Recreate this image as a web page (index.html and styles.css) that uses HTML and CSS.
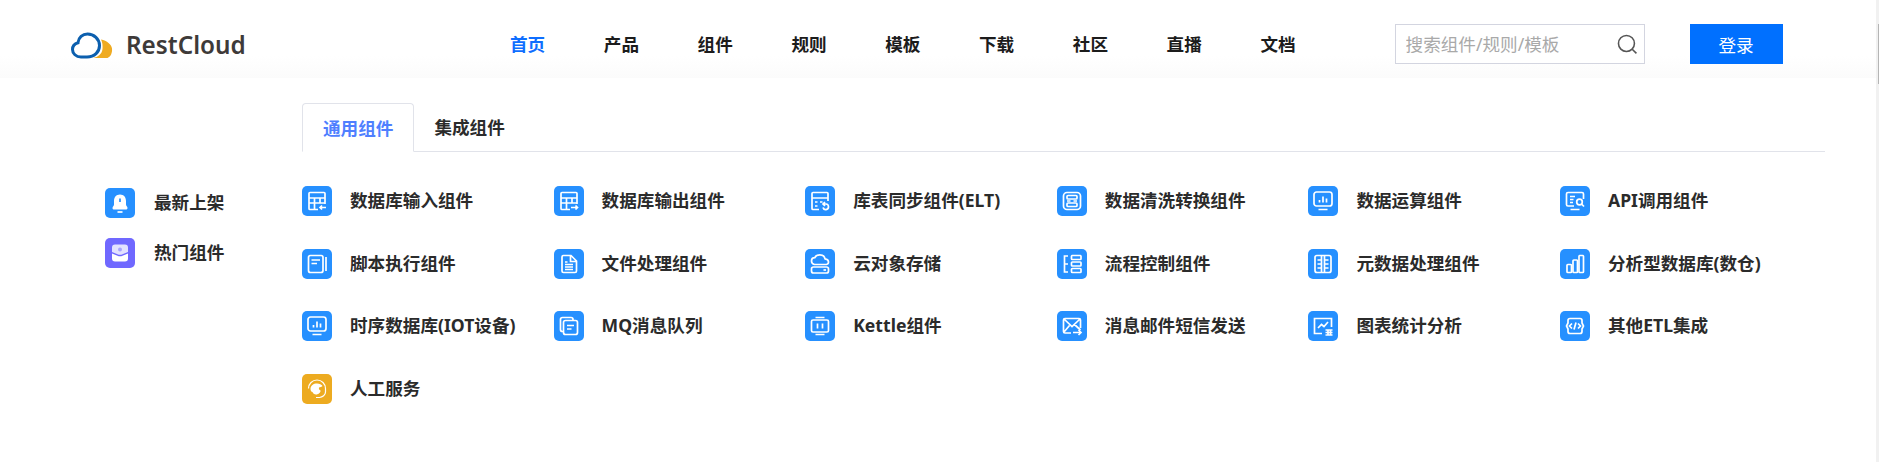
FILE: index.html
```html
<!DOCTYPE html>
<html lang="zh-CN">
<head>
<meta charset="utf-8">
<title>RestCloud</title>
<link rel="stylesheet" href="styles.css">
</head>
<body>
<header class="header">
  <a class="logo" href="#">
    <svg class="logo-mark" viewBox="0 0 42 26" width="42" height="27" aria-hidden="true">
      <path class="logo-sun" d="M30 7c6 1 10.500 5 11 9 .4 4-1 8-4.500 9.500H22c5-1 9-4 9.500-9 .3-3.500 0-6.500-1.500-9.500z"/>
      <path class="logo-cloud" d="M10 24.500C5 24.500 1.500 21 1.500 17c0-3.500 2.500-6 5.500-6.800C7.500 5 11.500 1.500 16.500 1.500c6.500 0 12 5 12 11.500 0 6.500-5 11.500-12.500 11.500z"/>
    </svg>
    <span class="logo-text">RestCloud</span>
  </a>
  <nav class="nav">
    <a class="nav-link is-active" href="#">首页</a>
    <a class="nav-link" href="#">产品</a>
    <a class="nav-link" href="#">组件</a>
    <a class="nav-link" href="#">规则</a>
    <a class="nav-link" href="#">模板</a>
    <a class="nav-link" href="#">下载</a>
    <a class="nav-link" href="#">社区</a>
    <a class="nav-link" href="#">直播</a>
    <a class="nav-link" href="#">文档</a>
  </nav>
  <div class="search">
    <input class="search-input" type="text" placeholder="搜索组件/规则/模板">
    <svg class="search-icon" viewBox="0 0 20 20" width="21" height="21" aria-hidden="true">
      <circle cx="9" cy="9" r="7.600"/><path d="M14.500 14.500l4 4"/>
    </svg>
  </div>
  <button class="login" type="button">登录</button>
</header>

<main class="main">
  <aside class="side">
    <a class="item" href="#">
      <span class="ico">
        <svg viewBox="0 0 30 30"><path class="fill" d="M15 6.500c-3.800 0-6 2.800-6 6.500v3.500c0 1.500-1.500 2.200-1.500 3.500 0 1 .8 1.500 1.800 1.500h11.400c1 0 1.800-.5 1.800-1.500 0-1.300-1.500-2-1.500-3.500V13c0-3.700-2.200-6.500-6-6.500z"/><path class="hole" d="M15 10.500v3.500"/><path d="M12.500 24h5"/></svg>
      </span>
      <span class="item-label">最新上架</span>
    </a>
    <a class="item" href="#">
      <span class="ico ico-purple">
        <svg viewBox="0 0 30 30"><path class="fill soft" d="M10 6.500h10a3 3 0 0 1 3 3v4.500l-5.500 2.300c-1.500.7-3.500.7-5 0L7 14V9.500a3 3 0 0 1 3-3z"/><path class="fill" d="M7 15.500l5.500 2.300c1.500.7 3.500.7 5 0l5.500-2.300v5a3 3 0 0 1-3 3H10a3 3 0 0 1-3-3z"/><circle class="dot" cx="15" cy="11.500" r="2"/></svg>
      </span>
      <span class="item-label">热门组件</span>
    </a>
  </aside>

  <section class="content">
    <div class="tabs">
      <a class="tab is-active" href="#">通用组件</a>
      <a class="tab" href="#">集成组件</a>
    </div>
    <div class="grid">
      <a class="item" href="#"><span class="ico"><svg viewBox="0 0 30 30"><path d="M23 18V7.500a1 1 0 0 0-1-1H8a1 1 0 0 0-1 1v15a1 1 0 0 0 1 1h8M7 12h16M7 17h16M12.500 12v11.500M18 12v5M24 21.500h-6M20 19.500l-2 2 2 2"/></svg></span><span class="item-label">数据库输入组件</span></a>
      <a class="item" href="#"><span class="ico"><svg viewBox="0 0 30 30"><path d="M23 18V7.500a1 1 0 0 0-1-1H8a1 1 0 0 0-1 1v15a1 1 0 0 0 1 1h8M7 12h16M7 17h16M12.500 12v11.500M18 12v5M17 21.500h6.500M21.500 19.500l2 2-2 2"/></svg></span><span class="item-label">数据库输出组件</span></a>
      <a class="item" href="#"><span class="ico"><svg viewBox="0 0 30 30"><path d="M23 15V7.500a1 1 0 0 0-1-1H8a1 1 0 0 0-1 1v15a1 1 0 0 0 1 1h6M7 12h16M10 16h2.500M15 16h2.500M10 20h2.500M18.500 18h2.500a2.800 2.800 0 1 1-3 3.500M20 16l-2 2 2 2"/></svg></span><span class="item-label">库表同步组件(ELT)</span></a>
      <a class="item" href="#"><span class="ico"><svg viewBox="0 0 30 30"><rect x="6.500" y="6.500" width="17" height="17" rx="3.500"/><rect x="10" y="9.500" width="10" height="3.500" rx="1"/><rect x="10" y="17" width="10" height="3.500" rx="1"/><path d="M10 15h3.500M16.500 15H20"/></svg></span><span class="item-label">数据清洗转换组件</span></a>
      <a class="item" href="#"><span class="ico"><svg viewBox="0 0 30 30"><rect x="6" y="6" width="18" height="14" rx="2.500"/><path d="M10.500 23.500h9M11.500 14v2.500M15 10.500v6M18.500 12.500v4"/></svg></span><span class="item-label">数据运算组件</span></a>
      <a class="item" href="#"><span class="ico"><svg viewBox="0 0 30 30"><path d="M23.500 13V8a1.500 1.500 0 0 0-1.500-1.500H8A1.500 1.500 0 0 0 6.500 8v10.500A1.500 1.500 0 0 0 8 20h6M10 10.500h5M10 13.500h3.500M10 16.500h3M10.500 23.500h9"/><circle cx="19.500" cy="16" r="2.800"/><path d="M21.500 18l2.500 2.500"/></svg></span><span class="item-label">API调用组件</span></a>

      <a class="item" href="#"><span class="ico"><svg viewBox="0 0 30 30"><rect x="6.500" y="6.500" width="14.500" height="17" rx="2"/><path d="M9.500 11h8.500M9.500 14.500h5.500M24 8v14"/></svg></span><span class="item-label">脚本执行组件</span></a>
      <a class="item" href="#"><span class="ico"><svg viewBox="0 0 30 30"><path d="M8 8a1.500 1.500 0 0 1 1.500-1.500H17l5.500 5.500v10a1.500 1.500 0 0 1-1.500 1.500H9.500A1.500 1.500 0 0 1 8 22zM16.500 6.500V12.500h6M11 13h2.500M11 15.500h8M11 18h8M11 20.500h8"/></svg></span><span class="item-label">文件处理组件</span></a>
      <a class="item" href="#"><span class="ico"><svg viewBox="0 0 30 30"><path d="M9.500 15.500C7.500 15 6.500 13.500 6.500 12c0-2 1.500-3.300 3.300-3.300C10.500 7 12.500 5.800 14.800 5.800c2.700 0 4.700 1.700 5.200 4 2 .2 3.500 1.700 3.500 3.300 0 1.300-.8 2.200-2 2.400z"/><rect x="6.500" y="18" width="17" height="6" rx="2"/><path d="M18.500 21h2.500"/></svg></span><span class="item-label">云对象存储</span></a>
      <a class="item" href="#"><span class="ico"><svg viewBox="0 0 30 30"><path d="M11 7H7.500v16H11M7.500 15H11"/><rect x="14.500" y="6.500" width="9.500" height="4" rx=".8"/><rect x="14.500" y="13" width="9.500" height="4" rx=".8"/><rect x="14.500" y="19.500" width="9.500" height="4" rx=".8"/></svg></span><span class="item-label">流程控制组件</span></a>
      <a class="item" href="#"><span class="ico"><svg viewBox="0 0 30 30"><rect x="7" y="6.500" width="16" height="17" rx="2"/><path d="M13.500 6.500v17M16.500 6.500v17M9.500 11H13.500M9.500 15H13.500M9.500 19H13.500M16.500 11h4M16.500 15h4M16.500 19h4"/></svg></span><span class="item-label">元数据处理组件</span></a>
      <a class="item" href="#"><span class="ico"><svg viewBox="0 0 30 30"><rect x="7" y="15.500" width="4.500" height="8" rx=".8"/><rect x="13" y="11" width="4.500" height="12.500" rx=".8"/><rect x="19" y="6.500" width="4.500" height="17" rx=".8"/></svg></span><span class="item-label">分析型数据库(数仓)</span></a>

      <a class="item" href="#"><span class="ico"><svg viewBox="0 0 30 30"><rect x="6" y="6" width="18" height="14" rx="2.500"/><path d="M10.500 23.500h9M11.500 14v2.500M15 10.500v6M18.500 12.500v4"/></svg></span><span class="item-label">时序数据库(IOT设备)</span></a>
      <a class="item" href="#"><span class="ico"><svg viewBox="0 0 30 30"><path d="M9 20.500H8.500a2 2 0 0 1-2-2V8.500a2 2 0 0 1 2-2H17a2 2 0 0 1 2 2V9"/><rect x="9.500" y="9.500" width="14" height="14" rx="2"/><path d="M13 14.500h7M13 18h4.500"/></svg></span><span class="item-label">MQ消息队列</span></a>
      <a class="item" href="#"><span class="ico"><svg viewBox="0 0 30 30"><rect x="6.500" y="9" width="17" height="12" rx="1.500"/><path d="M10.500 6.500h9M10.500 23.500h9M12.500 12.500v5M17.500 12.500v5"/></svg></span><span class="item-label">Kettle组件</span></a>
      <a class="item" href="#"><span class="ico"><svg viewBox="0 0 30 30"><path d="M14 22H8a1.500 1.500 0 0 1-1.500-1.500V9A1.500 1.500 0 0 1 8 7.500h14A1.500 1.500 0 0 1 23.500 9v8M7 8l8 7.500L23 8M7 21l5.500-6.500M17.500 13.500l6 5.500M16 21.500h8M21.500 19l2.500 2.500-2.500 2.500"/></svg></span><span class="item-label">消息邮件短信发送</span></a>
      <a class="item" href="#"><span class="ico"><svg viewBox="0 0 30 30"><path d="M14 22.500H6.500v-15h17V16M10 17l3.500-3.500 2.500 2 4-4.500M17.500 19h7M17.500 21.500h7M17.500 24h7M20 18.500v6M22.500 18.500v6"/></svg></span><span class="item-label">图表统计分析</span></a>
      <a class="item" href="#"><span class="ico"><svg viewBox="0 0 30 30"><path d="M8 12V9.500A2 2 0 0 1 10 7.500h10a2 2 0 0 1 2 2V12l1.500 3-1.500 3v2.500a2 2 0 0 1-2 2H10a2 2 0 0 1-2-2V18l-1.500-3zM12 12.500L9.500 15l2.500 2.500M18 12.500l2.500 2.500-2.500 2.500M16 11.500l-2 7"/></svg></span><span class="item-label">其他ETL集成</span></a>

      <a class="item" href="#"><span class="ico ico-orange"><svg viewBox="0 0 30 30"><path class="thin" d="M6.500 14.500a8.500 8.500 0 0 1 17 0v3.500M23.500 18c0 3-3 5.300-6 5.500M14 23.500h3.500"/><path class="fill" d="M8.500 15c0-3.500 3-5.500 6.500-5.500 2.500 0 4.500 1 5.500 2.500-.5 1-2.500 1-3.500 1.500-.5 1.500.5 2.500 1.500 3 .5 1.500-1.800 4-4.500 4-1.800 0-3-1-3.500-2.500-1.300 0-2-1.500-2-3z"/></svg></span><span class="item-label">人工服务</span></a>
    </div>
  </section>
</main>

<div class="scrollbar" aria-hidden="true"><div class="scrollbar-thumb"></div></div>
</body>
</html>
```

FILE: styles.css
```css
* { box-sizing: border-box; }

html, body {
  margin: 0;
  height: 100%;
  overflow: hidden;
  background: #fff;
}

body {
  position: relative;
  font-family: "Noto Sans", "Noto Sans CJK SC", sans-serif;
  font-size: 17.6px;
  color: #2b2b2b;
}

a { color: inherit; text-decoration: none; }

/* header */
.header {
  display: flex;
  align-items: flex-start;
  height: 78px;
  padding: 24px 0 0 71px;
  background: linear-gradient(#fff 56px, #fbfbfb 78px);
}

.logo {
  display: flex;
  align-items: center;
  width: 439px;
  height: 40px;
  gap: 13px;
}

.logo-mark { flex: none; margin-top: 2px; }
.logo-sun { fill: #efab22; }
.logo-cloud { fill: #fff; stroke: #0c5fae; stroke-width: 3; }

.logo-text {
  margin-top: 2px;
  font-family: "Noto Sans", sans-serif;
  font-size: 24.3px;
  font-weight: 600;
  line-height: 1;
  color: #3e3a39;
}

.nav {
  display: flex;
  gap: 58.6px;
  height: 40px;
  align-items: center;
}

.nav-link {
  font-weight: 700;
  line-height: 40px;
  color: #1c1c1c;
}

.nav-link.is-active { color: #0e6eff; }

.search {
  position: relative;
  width: 250px;
  height: 40px;
  margin-left: 99px;
}

.search-input {
  display: block;
  width: 100%;
  height: 100%;
  padding: 0 36px 0 10px;
  border: 1px solid #d3d5e0;
  outline: none;
  background: #fff;
  font: inherit;
  color: #333;
}

.search-input::placeholder { color: #a9a9a9; opacity: 1; }

.search-icon {
  position: absolute;
  top: 10px;
  right: 7px;
  fill: none;
  stroke: #555;
  stroke-width: 1.5;
}

.login {
  width: 93px;
  height: 40px;
  margin-left: 45px;
  padding: 0;
  border: 0;
  background: #0070ff;
  color: #fff;
  font: inherit;
}

/* main */
.main {
  display: flex;
  align-items: flex-start;
}

.side {
  display: flex;
  flex-direction: column;
  gap: 20px;
  width: 302px;
  padding: 110px 0 0 105px;
}

.content {
  width: 1523px;
  padding-top: 25px;
}

.tabs {
  display: flex;
  height: 49px;
  border-bottom: 1px solid #e1e3ea;
}

.tab {
  height: 49px;
  padding: 0 20px;
  font-weight: 700;
  line-height: 48px;
  color: #2b2b2b;
}

.tab.is-active {
  border: 1px solid #e1e3ea;
  border-bottom-color: #fff;
  border-radius: 4px 4px 0 0;
  color: #4f7fff;
}

.grid {
  display: grid;
  grid-template-columns: repeat(6, 251.6px);
  grid-auto-rows: 30px;
  row-gap: 32.67px;
  padding-top: 34px;
}

.item {
  display: flex;
  align-items: center;
  gap: 18px;
  height: 30px;
}

.item-label {
  padding-bottom: 2px;
  font-weight: 700;
  line-height: 30px;
  white-space: nowrap;
}

.side .item { gap: 19px; }
.side .item-label { padding-bottom: 3px; }

.ico {
  flex: none;
  display: block;
  width: 30px;
  height: 30px;
  border-radius: 5px;
  background: #2690ff;
}

.ico-purple { background: #7068ff; }
.ico-orange { background: #edab20; }

.ico svg {
  display: block;
  width: 30px;
  height: 30px;
  fill: none;
  stroke: #fff;
  stroke-width: 1.7;
}

.ico .fill { fill: #fff; stroke: none; }
.ico .thin { stroke-width: 1.2; }
.ico .soft { fill: #e3e1ff; }
.ico .dot { fill: #a9a4ff; stroke: none; }
.ico .hole { stroke: #2690ff; }

/* page scrollbar */
.scrollbar {
  position: absolute;
  top: 0;
  right: 0;
  bottom: 0;
  width: 3px;
  background: #f1f1f1;
}

.scrollbar-thumb {
  width: 1px;
  height: 60px;
  margin: 24px 0 0 2px;
  background: #b5b5b5;
}
```
